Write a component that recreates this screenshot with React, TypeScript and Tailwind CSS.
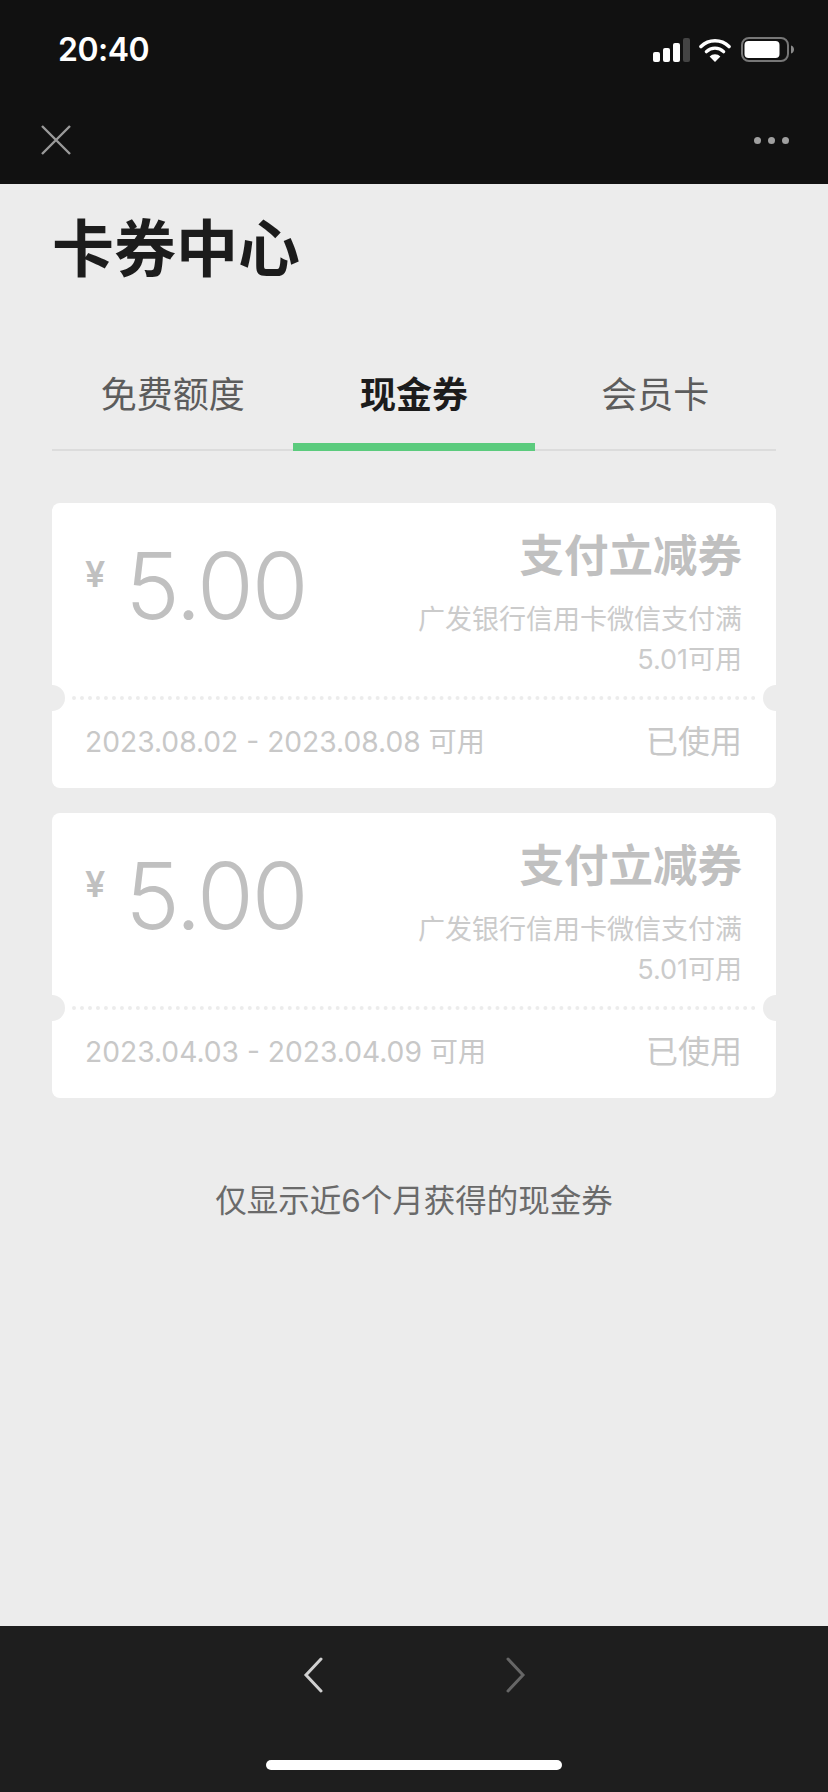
const cjk = "font-['Inter','Noto_Sans_CJK_SC',sans-serif]";

const coupons = [
    { range: '2023.08.02 - 2023.08.08 可用' },
    { range: '2023.04.03 - 2023.04.09 可用' },
];

const StatusIcons = () => (
    <div className="flex items-center">
        <svg width="37" height="24" viewBox="0 0 37 24" className="mr-[9px]">
            <rect x="0" y="14" width="7" height="10" rx="2" fill="#fff" />
            <rect x="10" y="10" width="7" height="14" rx="2" fill="#fff" />
            <rect x="20" y="5" width="7" height="19" rx="2" fill="#fff" />
            <rect x="30" y="0" width="7" height="24" rx="2" fill="#444" />
        </svg>
        <svg width="32" height="24" viewBox="0 0 32 24" className="mr-[10px]">
            <path d="M2 8.500a20 20 0 0 1 28 0" fill="none" stroke="#fff" strokeWidth="3.600" strokeLinecap="round" />
            <path d="M7.400 13.600a12.400 12.400 0 0 1 17.200 0" fill="none" stroke="#fff" strokeWidth="3.400" strokeLinecap="round" />
            <path d="M16 24l-5.400-5.600a7.600 7.600 0 0 1 10.800 0z" fill="#fff" />
        </svg>
        <svg width="53" height="25" viewBox="0 0 53 25">
            <rect x="1" y="1" width="46" height="23" rx="7" fill="none" stroke="#777" strokeWidth="2" />
            <rect x="3.500" y="4" width="35" height="17" rx="4" fill="#fff" />
            <path d="M50 8.500c2 .5 3 2.200 3 4s-1 3.500-3 4z" fill="#8a8a8a" />
        </svg>
    </div>
);

const CouponCard = ({ range }: { range: string }) => (
    <div className="relative h-[285px] bg-white rounded-[8px] text-[#c0c0c0] overflow-hidden">
        <div className="h-[193px] flex justify-between pl-[33px] pr-[34px]">
            <div className="flex items-start pt-[33px]">
                <span className="text-[36px] leading-[60px] font-semibold mt-[8px] mr-[20px]">¥</span>
                <span className="text-[92px] leading-[100px] font-light tracking-[-2px]">5.00</span>
            </div>
            <div className="flex flex-col items-end pt-[26px]">
                <div className="text-[44.500px] leading-[54px] font-bold">支付立减券</div>
                <div className="w-[330px] text-right text-[27px] leading-[40px] mt-[17px] text-[#cbcbcb]">
                    广发银行信用卡微信支付满 5.01可用
                </div>
            </div>
        </div>
        <div className="mx-[20px] border-t-[4px] border-dotted border-[#ececec]" />
        <div className="flex justify-between items-center pl-[33px] pr-[34px] pt-[22px] leading-[40px] text-[#c8c8c8]">
            <span className="text-[28.200px]">{range}</span>
            <span className="text-[32px]">已使用</span>
        </div>
        <span className="absolute left-[-13px] top-[182px] w-[26px] h-[26px] rounded-full bg-[#ececec]" />
        <span className="absolute right-[-13px] top-[182px] w-[26px] h-[26px] rounded-full bg-[#ececec]" />
    </div>
);

export default function App() {
    return (
        <div className={`w-[828px] h-[1792px] flex flex-col bg-[#ececec] ${cjk}`}>
            <header className="h-[184px] shrink-0 bg-[#111111]">
                <div className="h-[96px] flex items-center justify-between pl-[58px] pr-[34px] pt-[3px]">
                    <span className="text-[32px] font-semibold text-white tracking-[-0.5px]">20:40</span>
                    <StatusIcons />
                </div>
                <div className="flex items-center justify-between pl-[40px] pr-[39px] pt-[28px]">
                    <svg width="32" height="32" viewBox="0 0 32 32">
                        <path d="M2 2l28 28M30 2L2 30" stroke="#9a9a9a" strokeWidth="2.400" fill="none" />
                    </svg>
                    <div className="flex gap-[7px]">
                        <span className="w-[7px] h-[7px] rounded-full bg-[#a0a0a0]" />
                        <span className="w-[7px] h-[7px] rounded-full bg-[#a0a0a0]" />
                        <span className="w-[7px] h-[7px] rounded-full bg-[#a0a0a0]" />
                    </div>
                </div>
            </header>

            <main className="flex-1 px-[52px]">
                <h1 className="mt-[34px] text-[62px] leading-[64px] font-bold text-[#1c1c1c]">卡券中心</h1>

                <nav className="mt-[61px] h-[108px] grid grid-cols-3 border-b-2 border-[#dcdcdc] text-[36px] text-[#5c5c5c]">
                    <div className="flex justify-center pt-[25px] leading-[54px]">免费额度</div>
                    <div className="relative flex justify-center pt-[25px] leading-[54px] font-bold text-[#1c1c1c]">
                        现金券
                        <span className="absolute left-0 right-0 bottom-[-2px] h-[8px] bg-[#5bcb7d]" />
                    </div>
                    <div className="flex justify-center pt-[25px] leading-[54px]">会员卡</div>
                </nav>

                <div className="mt-[52px] flex flex-col gap-[25px]">
                    {coupons.map((c) => (
                        <CouponCard key={c.range} range={c.range} />
                    ))}
                </div>

                <p className="mt-[81px] text-center text-[31.500px] leading-[44px] text-[#6a6a6a]">
                    仅显示近6个月获得的现金券
                </p>
            </main>

            <footer className="h-[166px] shrink-0 bg-[#1e1e1e] relative">
                <div className="flex justify-center gap-[183px] pt-[31px]">
                    <svg width="20" height="36" viewBox="0 0 20 36">
                        <path d="M18 2L3 18l15 16" stroke="#d0d0d0" strokeWidth="3" fill="none" strokeLinecap="round" />
                    </svg>
                    <svg width="20" height="36" viewBox="0 0 20 36">
                        <path d="M2 2l15 16L2 34" stroke="#666" strokeWidth="3" fill="none" strokeLinecap="round" />
                    </svg>
                </div>
                <div className="absolute left-[266px] bottom-[22px] w-[296px] h-[10px] rounded-full bg-white" />
            </footer>
        </div>
    );
}
